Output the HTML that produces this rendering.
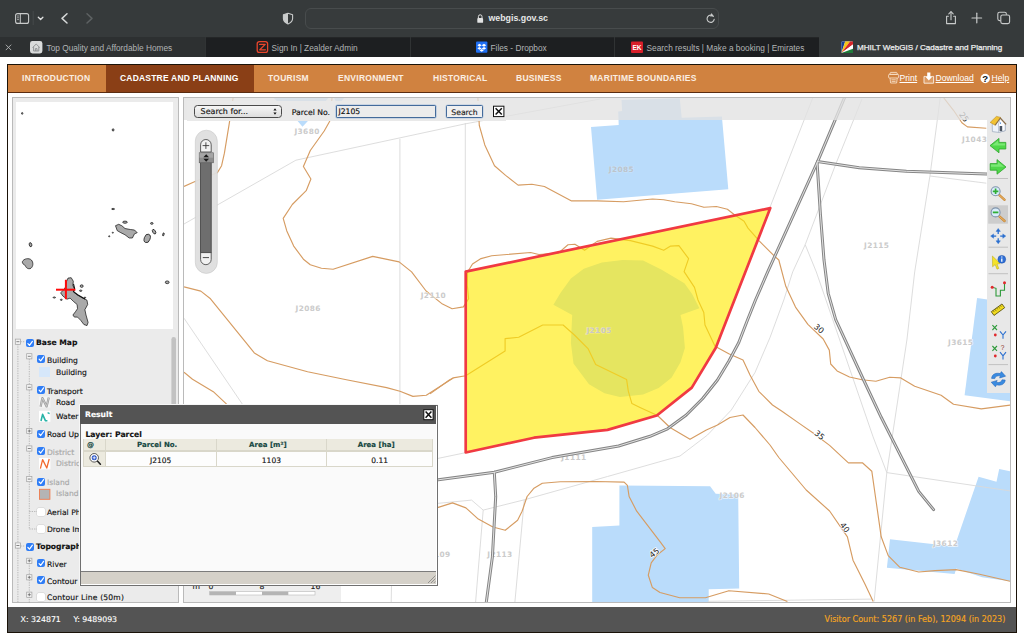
<!DOCTYPE html>
<html>
<head>
<meta charset="utf-8">
<title>MHILT WebGIS / Cadastre and Planning</title>
<style>
html,body{margin:0;padding:0;}
body{width:1024px;height:640px;overflow:hidden;background:#fff;position:relative;font-family:"Liberation Sans",sans-serif;}
.abs{position:absolute;}
svg{position:absolute;left:0;top:0;overflow:visible;}
#toolbar{left:0;top:0;width:1024px;height:37px;background:#363a3b;}
#tabbar{left:0;top:37px;width:1024px;height:20px;background:#1d1f21;border-top:1px solid #242627;box-sizing:border-box;}
.tab{position:absolute;top:37px;height:20px;box-sizing:border-box;}
.tabtxt{position:absolute;top:37.5px;height:20px;line-height:20px;color:#b2b5b6;font-size:8.3px;white-space:nowrap;}
#urlbar{left:305px;top:8px;width:414px;height:21px;border-radius:6px;background:#373b3c;border:1px solid #484c4d;box-sizing:border-box;}
#frame{left:7px;top:64px;width:1010px;height:569px;background:#fff;border:1px solid #1a1208;box-sizing:border-box;}
#nav{left:8px;top:65px;width:1008px;height:27px;background:#d08240;border-bottom:1px solid #5a2c10;}
.navi{position:absolute;top:65px;height:27px;line-height:27px;color:#fbeee2;font-size:8.5px;letter-spacing:0.27px;white-space:nowrap;font-weight:bold;}
.navr{position:absolute;top:65px;height:27px;line-height:26px;color:#fff;font-size:8.6px;white-space:nowrap;text-decoration:underline;}
#footer{left:8px;top:607px;width:1008px;height:25px;background:#545454;}
#left{left:12px;top:97px;width:167px;height:506px;background:#ebebeb;border:1px solid #bababa;box-sizing:border-box;overflow:hidden;}
#ov{left:16px;top:102px;width:157.4px;height:227px;background:#fff;}
#map{left:183px;top:97px;width:828px;height:506px;background:#fff;border:1px solid #bababa;box-sizing:border-box;}
.vd{font-family:"DejaVu Sans","Liberation Sans",sans-serif;-webkit-text-stroke:0.15px;}
.tr{position:absolute;font-family:"DejaVu Sans","Liberation Sans",sans-serif;font-size:7.6px;color:#111;white-space:nowrap;line-height:12px;height:12px;-webkit-text-stroke:0.15px;}
.cb{position:absolute;width:8px;height:8px;border-radius:2px;background:#2f7df6;}
.cbo{position:absolute;width:8px;height:8px;border-radius:1.5px;background:#fff;box-shadow:0 0 0 0.5px #cfcfcf;}
.ml{font-family:"DejaVu Sans","Liberation Sans",sans-serif;font-weight:bold;font-size:7.4px;fill:#cbcbcb;stroke:rgba(255,255,255,0.7);stroke-width:1.3px;paint-order:stroke;letter-spacing:0.4px;}
.cl{font-family:"DejaVu Sans","Liberation Sans",sans-serif;font-size:8px;fill:#222;stroke:#fff;stroke-width:1.5px;paint-order:stroke;}
.th{top:439.4px;height:11px;line-height:13.4px;overflow:hidden;background:#eceadf;color:#14463f;font-weight:bold;font-size:7px;text-align:center;padding-right:7px;box-sizing:border-box;}
.td{top:451.6px;height:14.2px;line-height:17.2px;overflow:hidden;background:#fdfdfd;color:#111;font-size:7.5px;text-align:center;}
</style>
</head>
<body>
<div id="toolbar" class="abs"></div>
<div id="urlbar" class="abs"></div>
<div id="tabbar" class="abs"></div>
<div class="tab" style="left:0;width:205px;background:#2d3031;"></div>
<div class="tab" style="left:205px;width:1px;background:#303334;"></div>
<div class="tab" style="left:410px;width:1px;background:#303334;"></div>
<div class="tab" style="left:614px;width:1px;background:#303334;"></div>
<div class="tab" style="left:819px;width:205px;background:#363a3b;top:37px;"></div>
<div class="tabtxt" style="left:46.5px;">Top Quality and Affordable Homes</div>
<div class="tabtxt" style="left:271.5px;">Sign In | Zealder Admin</div>
<div class="tabtxt" style="left:490.5px;">Files - Dropbox</div>
<div class="tabtxt" style="left:646.5px;">Search results | Make a booking | Emirates</div>
<div class="tabtxt" style="left:857px;color:#eceded;font-size:8.1px;-webkit-text-stroke:0.25px #eceded;">MHILT WebGIS / Cadastre and Planning</div>
<div class="abs" style="left:488.5px;top:8px;height:21px;line-height:21.6px;font-size:8.8px;color:#e6e7e7;font-weight:bold;">webgis.gov.sc</div>
<svg width="1024" height="60" viewBox="0 0 1024 60">
 <!-- sidebar icon -->
 <rect x="15.6" y="13.6" width="13" height="9.8" rx="2" fill="none" stroke="#c9cbcb" stroke-width="1.1"/>
 <line x1="20.3" y1="13.6" x2="20.3" y2="23.4" stroke="#c9cbcb" stroke-width="1"/>
 <line x1="17" y1="16" x2="19" y2="16" stroke="#c9cbcb" stroke-width="0.7"/>
 <line x1="17" y1="17.8" x2="19" y2="17.8" stroke="#c9cbcb" stroke-width="0.7"/>
 <line x1="17" y1="19.6" x2="19" y2="19.6" stroke="#c9cbcb" stroke-width="0.7"/>
 <line x1="33.2" y1="11" x2="33.2" y2="25" stroke="#4a4e4f" stroke-width="0.8"/>
 <polyline points="38.3,17.2 40.6,19.5 42.9,17.2" fill="none" stroke="#e0e1e1" stroke-width="1.3" stroke-linecap="round" stroke-linejoin="round"/>
 <polyline points="67,13.8 62,18.4 67,23" fill="none" stroke="#d6d8d8" stroke-width="1.5" stroke-linecap="round" stroke-linejoin="round"/>
 <polyline points="87,13.8 92,18.4 87,23" fill="none" stroke="#5d6162" stroke-width="1.5" stroke-linecap="round" stroke-linejoin="round"/>
 <!-- shield -->
 <path d="M288,13.2 L292.6,14.8 L292.6,18.6 C292.6,21.2 290.6,23 288,24 C285.4,23 283.4,21.2 283.4,18.6 L283.4,14.8 Z" fill="none" stroke="#c9cbcb" stroke-width="1.1" stroke-linejoin="round"/>
 <path d="M288,13.2 L283.4,14.8 L283.4,18.6 C283.4,21.2 285.4,23 288,24 Z" fill="#c9cbcb"/>
 <!-- lock -->
 <rect x="477.3" y="18" width="5.8" height="4.8" rx="0.9" fill="#e2e3e3"/>
 <path d="M478.4,18.2 V16.6 A1.8,1.8 0 0 1 482,16.6 V18.2" fill="none" stroke="#e2e3e3" stroke-width="1"/>
 <!-- reload -->
 <path d="M713.4,16.4 A3.6,3.6 0 1 0 714.2,19.4" fill="none" stroke="#c9cbcb" stroke-width="1.1" stroke-linecap="round"/>
 <path d="M711.2,13 L713.8,16 L710.4,16.8 Z" fill="#c9cbcb" transform="rotate(10 712 15)"/>
 <!-- share -->
 <path d="M948.4,16.2 H946.6 V23.6 H955.4 V16.2 H953.6" fill="none" stroke="#c9cbcb" stroke-width="1.1" stroke-linejoin="round" stroke-linecap="round"/>
 <line x1="951" y1="12" x2="951" y2="19.8" stroke="#c9cbcb" stroke-width="1.1" stroke-linecap="round"/>
 <polyline points="948.8,13.8 951,11.6 953.2,13.8" fill="none" stroke="#c9cbcb" stroke-width="1.1" stroke-linecap="round" stroke-linejoin="round"/>
 <!-- plus -->
 <line x1="972" y1="18" x2="981.6" y2="18" stroke="#c9cbcb" stroke-width="1.2" stroke-linecap="round"/>
 <line x1="976.8" y1="13.2" x2="976.8" y2="22.8" stroke="#c9cbcb" stroke-width="1.2" stroke-linecap="round"/>
 <!-- tabs overview -->
 <rect x="1000.8" y="15" width="8.8" height="8.6" rx="1.8" fill="#363a3b" stroke="#c9cbcb" stroke-width="1.1"/>
 <path d="M1000.6,20.6 H999.6 A1.8,1.8 0 0 1 997.8,18.8 V14 A1.8,1.8 0 0 1 999.6,12.2 H1004.6 A1.8,1.8 0 0 1 1006.4,14 V14.8" fill="none" stroke="#c9cbcb" stroke-width="1.1"/>
 <path d="M5.8,44.7 L11.2,50.1 M11.2,44.7 L5.8,50.1" stroke="#b4b7b8" stroke-width="0.9" fill="none"/>
 <!-- tab favicons -->
 <rect x="30" y="41" width="12.4" height="12.4" rx="2.4" fill="#d9dbdb"/>
 <path d="M32.6,47.6 L36.2,44 L39.8,47.6 M33.6,46.8 V51 H38.8 V46.8 M35.4,51 V48.6 H37 V51" fill="none" stroke="#8a8d8e" stroke-width="0.9" stroke-linejoin="round"/>
 <rect x="257.2" y="41.6" width="10.4" height="10.8" rx="2.2" fill="none" stroke="#e8452c" stroke-width="1.3"/>
 <path d="M259.6,44.4 H265.2 L259.8,49.8 H265.4" fill="none" stroke="#e8452c" stroke-width="1.3" stroke-linejoin="round" stroke-linecap="round"/>
 <rect x="476" y="41.4" width="11.4" height="11.4" rx="1" fill="#1f6ff2"/>
 <path d="M479.4,43.8 L481.7,45.3 L479.4,46.8 L477.4,45.3 Z M484,43.8 L486.2,45.3 L484,46.8 L481.7,45.3 Z M479.4,46.9 L481.7,48.4 L484,46.9 L486.2,48.3 L484,49.8 L481.7,48.4 L479.4,49.8 L477.4,48.3 Z M479.6,50.4 L481.7,49 L483.8,50.4 L481.7,51.8 Z" fill="#fff"/>
 <rect x="631" y="41.4" width="12" height="11.6" rx="1" fill="#d81f2a"/>
 <text x="637" y="50" font-size="6.6" font-weight="bold" fill="#fff" text-anchor="middle" font-family="Liberation Sans, sans-serif">EK</text>
 <g>
  <rect x="841.4" y="41.4" width="11.6" height="11.6" rx="1" fill="#fff"/>
  <path d="M841.4,53 L841.4,41.4 L845.2,41.4 Z" fill="#1a3f94"/>
  <path d="M841.4,53 L845.2,41.4 L850,41.4 Z" fill="#f5c518"/>
  <path d="M841.4,53 L850,41.4 L853,41.4 L853,44.4 Z" fill="#d6262b"/>
  <path d="M841.4,53 L853,44.4 L853,48.8 Z" fill="#ffffff"/>
  <path d="M841.4,53 L853,48.8 L853,53 Z" fill="#1f7a3a"/>
 </g>
</svg>
<div id="frame" class="abs"></div>
<div id="nav" class="abs"></div>
<div class="abs" style="left:106px;top:65px;width:148px;height:27px;background:#8a3f16;"></div>
<div class="navi" style="left:22px;">INTRODUCTION</div>
<div class="navi" style="left:120px;color:#fff;letter-spacing:0.2px;">CADASTRE AND PLANNING</div>
<div class="navi" style="left:268px;">TOURISM</div>
<div class="navi" style="left:338px;">ENVIRONMENT</div>
<div class="navi" style="left:433px;">HISTORICAL</div>
<div class="navi" style="left:516px;">BUSINESS</div>
<div class="navi" style="left:590px;">MARITIME BOUNDARIES</div>
<div class="navr" style="left:899.5px;">Print</div>
<div class="navr" style="left:935.5px;">Download</div>
<div class="navr" style="left:991.5px;">Help</div>
<svg width="1024" height="100" viewBox="0 0 1024 100">
 <!-- print icon -->
 <g fill="none" stroke="#f6dcc4" stroke-width="0.9" stroke-linejoin="round">
  <path d="M889.6,74.4 L890.6,72.4 H896.6 L897.6,74.4 Z"/>
  <rect x="888.6" y="74.4" width="10" height="3.6" rx="0.8"/>
  <path d="M890,78 L890.6,83 H896.6 L897.2,78"/>
  <path d="M891.4,79.8 H895.8 M891.6,81.4 H895.6"/>
 </g>
 <!-- download icon -->
 <g>
  <path d="M925.4,76.4 H924 V83.2 H933.6 V76.4 H932.2" fill="#dc9a62" stroke="#f8e6d6" stroke-width="1" stroke-linejoin="round"/>
  <path d="M927.2,72.4 H930.4 V76.2 H932.6 L928.8,80.6 L925,76.2 H927.2 Z" fill="#fff"/>
 </g>
 <!-- help icon -->
 <circle cx="985.2" cy="78.5" r="4.7" fill="#fff"/>
 <text x="985.2" y="82" font-size="9.6" font-weight="bold" fill="#111" text-anchor="middle" font-family="Liberation Sans, sans-serif">?</text>
</svg>
<div id="left" class="abs"></div>
<div id="ov" class="abs"></div>
<svg width="200" height="340" viewBox="0 0 200 340">
 <g fill="#a9a9a9" stroke="#000" stroke-width="0.65" stroke-linejoin="round">
  <ellipse cx="22.2" cy="113.4" rx="0.7" ry="0.9"/>
  <ellipse cx="113.1" cy="129.9" rx="0.9" ry="1.2"/>
  <ellipse cx="113.1" cy="209" rx="1.6" ry="0.6"/>
  <polygon points="115.5,225.7 118.7,224.3 121.8,225.7 125,228.5 130.3,229.5 134.5,230 137.2,232.7 134.5,233.8 132.4,238 129.2,238 125,234.8 120.8,232.7 117.2,230.6"/>
  <ellipse cx="125" cy="222.2" rx="2.3" ry="1.1"/>
  <ellipse cx="109.2" cy="236.3" rx="0.6" ry="0.6"/>
  <ellipse cx="112.8" cy="232.7" rx="0.6" ry="0.5"/>
  <ellipse cx="151.8" cy="223.4" rx="1.3" ry="0.9"/>
  <ellipse cx="154.1" cy="231.7" rx="1.4" ry="2.5" transform="rotate(-30 154.1 231.7)"/>
  <ellipse cx="163.4" cy="234.4" rx="0.7" ry="1.6" transform="rotate(15 163.4 234.4)"/>
  <ellipse cx="147.2" cy="238.4" rx="2.9" ry="4.4" transform="rotate(20 147.2 238.4)"/>
  <ellipse cx="30.5" cy="244.7" rx="1.3" ry="2.1" transform="rotate(-15 30.5 244.7)"/>
  <path d="M22.4,261.6 C23.6,258.6 29,257.6 31.4,260 C33.6,262.6 33.2,266.4 31,268.2 C28.6,269.6 25.8,268 25.4,265.6 C23.6,264.6 22,263.4 22.4,261.6 Z"/>
  <ellipse cx="167.2" cy="282.3" rx="1.9" ry="1.4"/>
  <polygon points="68,278.1 71.2,277.7 73.3,281.2 72.9,285.5 74.4,288.6 73.3,291.8 77.5,295 82.8,298.1 87,300.2 87.7,304.5 84.9,309.7 86,315 88.1,322.4 87,325.6 83.9,324.5 80.7,320.3 77.5,317.1 74.4,317.1 72.9,315 75.4,311.8 77.5,308.7 77.1,304.5 73.3,301.3 70.1,298.1 67,299.2 62.8,296 60.6,292.8 63.8,289.7 65.9,286.5 66.6,281.2"/>
  <ellipse cx="81.7" cy="286.1" rx="1.5" ry="1.3"/>
  <ellipse cx="80.7" cy="290.7" rx="1.2" ry="0.7"/>
  <ellipse cx="54.3" cy="297.5" rx="1.2" ry="0.6"/>
  <ellipse cx="61.3" cy="299.8" rx="1" ry="0.6"/>
  <ellipse cx="84.9" cy="297.6" rx="0.8" ry="0.5"/>
 </g>
 <path d="M73.5,284 L74.6,288.6 L73.6,291.6 L77.6,294.8 L82.8,297.8 L85,299" fill="none" stroke="#111" stroke-width="1.1"/>
 <line x1="56" y1="289.7" x2="75.4" y2="289.7" stroke="#ff0a0a" stroke-width="2"/>
 <line x1="65.9" y1="279.8" x2="65.9" y2="299.2" stroke="#ff0a0a" stroke-width="2"/>
</svg>
<div class="cb" style="left:26px;top:339.40000000000003px;"></div>
<div class="tr" style="left:36px;top:337.1px;font-weight:bold;">Base Map</div>
<div class="cb" style="left:26px;top:543.1999999999999px;"></div>
<div class="tr" style="left:36px;top:540.9px;font-weight:bold;">Topographic Map</div>
<div class="cb" style="left:37.2px;top:354.8px;"></div>
<div class="tr" style="left:47px;top:354.6px;">Building</div>
<div class="cb" style="left:37.2px;top:385.8px;"></div>
<div class="tr" style="left:47px;top:385.6px;">Transport</div>
<div class="cb" style="left:37.2px;top:429.5px;"></div>
<div class="tr" style="left:47px;top:429.3px;">Road Update</div>
<div class="cb" style="left:37.2px;top:447.0px;"></div>
<div class="tr" style="left:47px;top:446.8px;color:#a8a8a8;">District</div>
<div class="cb" style="left:37.2px;top:477.6px;"></div>
<div class="tr" style="left:47px;top:477.4px;color:#a8a8a8;">Island</div>
<div class="cb" style="left:37.2px;top:559.3px;"></div>
<div class="tr" style="left:47px;top:559.1px;">River</div>
<div class="cb" style="left:37.2px;top:575.8px;"></div>
<div class="tr" style="left:47px;top:575.6px;">Contour Line</div>
<div class="cbo" style="left:37.4px;top:507.6px;"></div>
<div class="tr" style="left:47px;top:506.6px;">Aerial Photo</div>
<div class="cbo" style="left:37.4px;top:524.8px;"></div>
<div class="tr" style="left:47px;top:523.8px;">Drone Image</div>
<div class="cbo" style="left:37.4px;top:592.8px;"></div>
<div class="tr" style="left:47px;top:591.8px;letter-spacing:0.17px;">Contour Line (50m)</div>
<div class="tr" style="left:56px;top:367.2px;">Building</div>
<div class="abs" style="left:39px;top:366.6px;width:11.4px;height:10.4px;background:#d6e7fa;"></div>
<div class="tr" style="left:56px;top:397.2px;">Road</div>
<div class="tr" style="left:56px;top:411.0px;">Water Way</div>
<div class="tr" style="left:56px;top:458.0px;color:#a8a8a8;">District</div>
<div class="tr" style="left:56px;top:488.4px;color:#a8a8a8;">Island</div>
<svg width="200" height="640" viewBox="0 0 200 640">
<line x1="17.9" y1="344" x2="17.9" y2="603" stroke="#a4a4a4" stroke-width="0.7" stroke-dasharray="1.3,1.1"/>
<line x1="29.3" y1="359" x2="29.3" y2="529" stroke="#a4a4a4" stroke-width="0.7" stroke-dasharray="1.3,1.1"/>
<line x1="29.3" y1="563" x2="29.3" y2="603" stroke="#a4a4a4" stroke-width="0.7" stroke-dasharray="1.3,1.1"/>
<line x1="29.3" y1="511.5" x2="37" y2="511.5" stroke="#a4a4a4" stroke-width="0.7" stroke-dasharray="1.3,1.1"/>
<line x1="29.3" y1="529" x2="37" y2="529" stroke="#a4a4a4" stroke-width="0.7" stroke-dasharray="1.3,1.1"/>
<line x1="20.5" y1="341.7" x2="25" y2="341.7" stroke="#a4a4a4" stroke-width="0.7" stroke-dasharray="1.3,1.1"/>
<line x1="20.5" y1="546" x2="25" y2="546" stroke="#a4a4a4" stroke-width="0.7" stroke-dasharray="1.3,1.1"/>
<rect x="15.3" y="339.1" width="5.2" height="5.2" fill="#f4f4f4" stroke="#a0a0a0" stroke-width="0.7"/>
<line x1="16.4" y1="341.70000000000005" x2="19.4" y2="341.70000000000005" stroke="#666" stroke-width="0.8"/>
<polyline points="27.9,343.7 29.5,345.4 32.4,341.4" fill="none" stroke="#fff" stroke-width="1.2" stroke-linecap="round" stroke-linejoin="round"/>
<rect x="15.3" y="542.9" width="5.2" height="5.2" fill="#f4f4f4" stroke="#a0a0a0" stroke-width="0.7"/>
<line x1="16.4" y1="545.5" x2="19.4" y2="545.5" stroke="#666" stroke-width="0.8"/>
<polyline points="27.9,547.5 29.5,549.2 32.4,545.2" fill="none" stroke="#fff" stroke-width="1.2" stroke-linecap="round" stroke-linejoin="round"/>
<rect x="26.7" y="353.7" width="5.2" height="5.2" fill="#f4f4f4" stroke="#a0a0a0" stroke-width="0.7"/>
<line x1="27.8" y1="356.3" x2="30.8" y2="356.3" stroke="#666" stroke-width="0.8"/>
<polyline points="39.1,359.1 40.7,360.8 43.6,356.8" fill="none" stroke="#fff" stroke-width="1.2" stroke-linecap="round" stroke-linejoin="round"/>
<rect x="26.7" y="384.7" width="5.2" height="5.2" fill="#f4f4f4" stroke="#a0a0a0" stroke-width="0.7"/>
<line x1="27.8" y1="387.3" x2="30.8" y2="387.3" stroke="#666" stroke-width="0.8"/>
<polyline points="39.1,390.1 40.7,391.8 43.6,387.8" fill="none" stroke="#fff" stroke-width="1.2" stroke-linecap="round" stroke-linejoin="round"/>
<rect x="26.7" y="428.4" width="5.2" height="5.2" fill="#f4f4f4" stroke="#a0a0a0" stroke-width="0.7"/>
<line x1="27.8" y1="431.0" x2="30.8" y2="431.0" stroke="#666" stroke-width="0.8"/>
<line x1="29.3" y1="429.5" x2="29.3" y2="432.5" stroke="#666" stroke-width="0.8"/>
<polyline points="39.1,433.8 40.7,435.5 43.6,431.5" fill="none" stroke="#fff" stroke-width="1.2" stroke-linecap="round" stroke-linejoin="round"/>
<rect x="26.7" y="445.9" width="5.2" height="5.2" fill="#f4f4f4" stroke="#a0a0a0" stroke-width="0.7"/>
<line x1="27.8" y1="448.5" x2="30.8" y2="448.5" stroke="#666" stroke-width="0.8"/>
<polyline points="39.1,451.3 40.7,453.0 43.6,449.0" fill="none" stroke="#fff" stroke-width="1.2" stroke-linecap="round" stroke-linejoin="round"/>
<rect x="26.7" y="476.5" width="5.2" height="5.2" fill="#f4f4f4" stroke="#a0a0a0" stroke-width="0.7"/>
<line x1="27.8" y1="479.1" x2="30.8" y2="479.1" stroke="#666" stroke-width="0.8"/>
<polyline points="39.1,481.9 40.7,483.6 43.6,479.6" fill="none" stroke="#fff" stroke-width="1.2" stroke-linecap="round" stroke-linejoin="round"/>
<rect x="26.7" y="558.2" width="5.2" height="5.2" fill="#f4f4f4" stroke="#a0a0a0" stroke-width="0.7"/>
<line x1="27.8" y1="560.8" x2="30.8" y2="560.8" stroke="#666" stroke-width="0.8"/>
<line x1="29.3" y1="559.3" x2="29.3" y2="562.3" stroke="#666" stroke-width="0.8"/>
<polyline points="39.1,563.6 40.7,565.3 43.6,561.3" fill="none" stroke="#fff" stroke-width="1.2" stroke-linecap="round" stroke-linejoin="round"/>
<rect x="26.7" y="574.7" width="5.2" height="5.2" fill="#f4f4f4" stroke="#a0a0a0" stroke-width="0.7"/>
<line x1="27.8" y1="577.3" x2="30.8" y2="577.3" stroke="#666" stroke-width="0.8"/>
<line x1="29.3" y1="575.8" x2="29.3" y2="578.8" stroke="#666" stroke-width="0.8"/>
<polyline points="39.1,580.1 40.7,581.8 43.6,577.8" fill="none" stroke="#fff" stroke-width="1.2" stroke-linecap="round" stroke-linejoin="round"/>
<rect x="26.7" y="592.1" width="5.2" height="5.2" fill="#f4f4f4" stroke="#a0a0a0" stroke-width="0.7"/>
<line x1="27.8" y1="594.6999999999999" x2="30.8" y2="594.6999999999999" stroke="#666" stroke-width="0.8"/>
<line x1="29.3" y1="593.2" x2="29.3" y2="596.2" stroke="#666" stroke-width="0.8"/>
<rect x="39" y="396.6" width="11.4" height="11" fill="#f4f4f4"/>
<polyline points="40.6,406.8 42.4,398 46.6,406.4 48.8,397.4" fill="none" stroke="#9a9a9a" stroke-width="2.2" stroke-linejoin="round"/>
<polyline points="40.6,406.8 42.4,398 46.6,406.4 48.8,397.4" fill="none" stroke="#dcdcdc" stroke-width="0.7" stroke-linejoin="round"/>
<rect x="39" y="410.8" width="11.4" height="11" fill="#fff"/>
<polyline points="41,421 42.6,414.4 45.4,420.6 47.4,420.8" fill="none" stroke="#27b3a7" stroke-width="1.6" stroke-linejoin="round"/>
<polyline points="47.6,412.6 49.6,413.6" fill="none" stroke="#27b3a7" stroke-width="1.2"/>
<rect x="39" y="458" width="11.4" height="11.4" fill="#fff"/>
<polyline points="40.4,468.6 42.6,459.6 46.8,468 49.2,458.8" fill="none" stroke="#f26a2e" stroke-width="1.3" stroke-linejoin="round"/>
<rect x="39.5" y="489.3" width="10.4" height="10" fill="#b4b4b4" stroke="#ee7a4c" stroke-width="0.9"/>
<rect x="171.4" y="337" width="4.6" height="190" rx="2.3" fill="#c2c2c2"/>
</svg>
<div id="map" class="abs"></div>
<svg width="1024" height="640" viewBox="0 0 1024 640">
<defs><clipPath id="mc"><rect x="184" y="98" width="826" height="504"/></clipPath>
<clipPath id="pc"><polygon points="465.7,271.6 770.3,208.1 715.8,347.7 691.8,387.6 656.8,415.5 607.5,429.9 534,437.7 465.7,452.5"/></clipPath>
</defs>
<g clip-path="url(#mc)">
 <!-- buildings -->
 <g fill="#badcfb">
  <polygon points="591,126.9 618.7,125 618.2,111.6 622.1,111.1 621.5,100 679.8,98.3 681.7,117.7 721.9,116.6 728.3,189.3 597.1,199.8"/>
  <polygon points="273.7,98 328.4,98 325,102 307.9,121 302.5,126.7 297.6,121 278,102"/>
  <polygon points="334.2,98 344,98 341,102 336,102"/>
  <polygon points="977.1,298 1011,303 1011,401.5 964.6,395.3"/>
  <polygon points="619.4,485.4 710.1,486.2 715.7,493.7 738.2,494.6 739.2,588.4 708.7,589.3 708.7,603 592.2,603 592.2,527 619.4,525.6"/>
  <polygon points="978.6,476.7 996.5,481.8 999.2,469.1 1011,471.5 1011,581.5 982.1,577.3 956.3,568.4 954.6,573.9 886.9,567.7 890,539.2 954.6,546.4"/>
  <polygon points="553.4,304.8 560.6,292.7 570.9,278.5 583.8,268.7 601.9,262.5 622.5,260 643.1,260.5 661.2,269.5 684.4,283.2 692.1,294 699.4,308.2 680.5,315.1 683.1,327.5 684.9,348.1 680.5,362.3 671.5,377.8 658.6,388.1 643.1,394.6 619.9,397.1 604.5,393.3 589,384.2 573.5,363.6 570.9,343 572.2,315.1"/>
 </g>
 <!-- thin parcel lines -->
 <g fill="none" stroke="#d9d9d9" stroke-width="0.9">
  <polyline points="184,224 295.9,160.2 464,124.1 475.3,122 600,99"/>
  <line x1="399.9" y1="138.8" x2="399.9" y2="410"/>
  <line x1="391.6" y1="580" x2="391.2" y2="602"/>
  <line x1="465.3" y1="123" x2="465.3" y2="272"/>
  <line x1="184" y1="318.2" x2="242.4" y2="404.2"/>
  <line x1="812.7" y1="98" x2="770" y2="207.3"/>
  <polyline points="862,99 835.7,164.3 805.2,244.7 792.7,271.9 783.8,300 770,337.5 755,372.5 731.3,410 707.5,435 680,456 607.5,476.5 524.3,499.8 483.2,510.1 471.6,500.1 437.5,503.4"/>
  <polyline points="940.2,98 930,175.4 914.7,271.9 906.9,340 886.8,472.6 874.1,601.5"/>
  <line x1="930" y1="176" x2="986.3" y2="183.2"/>
  <polyline points="805.2,244.7 816.3,271.9 873.1,436.9 886.8,472.6 1010,490.9"/>
  <line x1="483.2" y1="510.1" x2="475.6" y2="602"/>
  <line x1="524.3" y1="499.8" x2="514.9" y2="602"/>
  <line x1="437.5" y1="458.5" x2="465.5" y2="452.7"/>
  <line x1="707.8" y1="601.3" x2="871.8" y2="599.1"/>
 </g>
 <!-- contours -->
 <g fill="none" stroke="#d69c62" stroke-width="1.15" stroke-linejoin="round">
  <polyline points="233.2,97.2 229.4,122.7 224.4,153.2 221.6,165.7 217.4,172.6 195,181.5 184,186.5"/>
  <polyline points="332,98 329.7,121.3 324.2,131 310.3,150.5 303.4,166.5 310.9,179 306.2,190.7 292.3,204.5 283.2,218.4 286.8,230.9 293.7,246.1 303.4,259.2 310.3,264.7 321.4,268.3 333.1,269.2 372.7,256.4 399.1,261.9 411.6,271.9 426.1,291 442.5,304.1 452.1,308.7 463.4,306.9 468.6,298.7 467.3,285 467.6,272 472.5,264 481,258.6 491.7,255.8 530.6,252.5 538.9,254.5 558.3,253.1 568,244.7 574.9,244.2 584.6,250.3 597.1,241.4 611,238.1 630.4,240.6 652.6,246.1 663.7,250.3 670.6,246.1 678.9,245.6 688.6,258.6 684.1,271.6 694.5,287.4 698,300 703.8,312.5 705,325 715,346.3 728.8,353.8 743,360 750,375 758.8,391.3 772.5,405 781.6,411.1 799.6,423.6 813.5,433.3 829.6,445.4 848.4,462.8 862.4,462.8 871.8,471.2 876.5,504 881.2,536.8 888.2,555.6 899.9,567.3 918.7,572 935.1,570.6 956.1,569.6 979.6,574.3 1010,581.3"/>
  <polyline points="477.9,98 479.3,125.5 484.8,144.9 494.5,165.7 505.6,175.4 518.1,185.1 531.9,184.3 544.4,186.5 571.6,200.9 597.1,200.9 623.5,201.8 652.6,199 663.7,199.8 674.8,201.8 691.4,203.7 703.9,207.3 716.4,206.5 727.4,209.3 734.4,214.8 744.1,221.2 748,228.1 759.4,241.1 773.9,255.6 778.8,260 785.8,286.3 795.5,307.1 807.9,324.3 823.2,339 829.3,350.1 830.7,364 837.1,370.9 849.5,377 862,379.8 875.9,381.2 889.7,377.3 900.8,377.9 914.7,386.2 941.1,395.3 953.5,404.2 981.3,408.9 1010.4,405"/>
  <polyline points="184,286.9 200.8,291.1 210.5,298.8 254.3,352.9 267.4,360.7 307.6,371.8 346.4,379.8 386.6,387.6 400,391.3 412.9,396.4 426.3,395.3 453.2,377.9 465.7,375.8 505.1,350.9 505.1,338.6 518.7,337.3 542.7,325 563.1,325 574.4,335 588,348.6 595.7,364.4 626.6,379.4 628.3,391.1 631.9,403.6 640,407.5 657.5,415.5 670,427.5 690,439.3 706.3,430 717.5,425 730,417.5 743,415 755,427.5 770,445 778.8,457.5 806.2,490 829.6,511 847.4,536.8 853,560.2 864.8,583.7 873.2,601.5"/>
  <polyline points="184,372.3 192.5,379.2 213.3,391.7 226.6,404.2 240,414"/>
  <polyline points="430,393.9 449.4,380 453.2,377.9"/>
  <polyline points="437.5,507.6 452.5,502.9 465.9,507.9 478.3,519.1 492.9,527 505.2,530.3 517.6,520.2 522.1,511.2 527.1,496.5 534,488.2 542.3,483.2 560.3,481.8 596.4,481.5 624.1,482.1 627.4,485.4 629.1,496.5 636.7,511.2 660,541.6 665.2,548.6 657.4,554.7 651.2,562.9 648.3,575.2 652.4,587.6 660,592.5 679.7,597.7 705.4,597.7 728.9,590.7 768.7,594 787.4,601.5"/>
  <polyline points="943.8,98 953.5,110.3 961.9,122.7 967.4,126.9 986.3,128.3"/>
 </g>
 <text class="ml" x="294.4" y="134">J3680</text>
 <text class="ml" x="295.6" y="311.3">J2086</text>
 <text class="ml" x="420.7" y="298">J2110</text>
 <text class="ml" x="608.8" y="172.1" style="fill:#bcc4cc;stroke:#c6e2fb;">J2085</text>
 <text class="ml" x="864" y="247.5">J2115</text>
 <text class="ml" x="961.9" y="142.1">J1043</text>
 <text class="ml" x="948" y="345.1">J3615</text>
 <text class="ml" x="561.2" y="459.6">J1111</text>
 <text class="ml" x="719.5" y="497.9">J2106</text>
 <text class="ml" x="932.9" y="545.7">J3612</text>
 <text class="ml" x="487.3" y="557.3">J2113</text>
 <text class="ml" x="425.2" y="557.3">J2109</text>
 <!-- roads -->
 <g fill="none" stroke="#858585" stroke-width="3" stroke-linejoin="round" stroke-linecap="round">
  <polyline points="844.8,97 817.6,161.6 767.7,271.9 755.5,300 747.5,320 738.8,342.5 728.8,361.3 717.5,380 702.5,398.8 686.3,415 667.5,428.8 650,436.3 618.6,446 552,457.6 494.3,472.3 438.3,479.8 420,482"/>
  <polyline points="817.6,161.6 859.2,167.7 906.4,171.3 986.3,174 1000,174"/>
  <polyline points="817.1,162.9 820.4,214.2 824,260 828.2,293.3 835.7,319.6 862,376.5 881.2,417.3 918.7,491.4 933.6,509.6"/>
  <polyline points="494.3,472.3 495.7,496.5 492.4,556.9 486.2,603"/>
 </g>
 <g fill="none" stroke="#ececec" stroke-width="0.9" stroke-linejoin="round" stroke-linecap="round">
  <polyline points="844.8,97 817.6,161.6 767.7,271.9 755.5,300 747.5,320 738.8,342.5 728.8,361.3 717.5,380 702.5,398.8 686.3,415 667.5,428.8 650,436.3 618.6,446 552,457.6 494.3,472.3 438.3,479.8 420,482"/>
  <polyline points="817.6,161.6 859.2,167.7 906.4,171.3 986.3,174 1000,174"/>
  <polyline points="817.1,162.9 820.4,214.2 824,260 828.2,293.3 835.7,319.6 862,376.5 881.2,417.3 918.7,491.4 933.6,509.6"/>
  <polyline points="494.3,472.3 495.7,496.5 492.4,556.9 486.2,603"/>
 </g>
 <!-- labels -->
 <text class="cl" transform="translate(964,117) rotate(55)" text-anchor="middle" dy="2.8">25</text>
 <text class="cl" transform="translate(819,328.5) rotate(40)" text-anchor="middle" dy="2.8">30</text>
 <text class="cl" transform="translate(819.5,435) rotate(40)" text-anchor="middle" dy="2.8">35</text>
 <text class="cl" transform="translate(844.8,527.4) rotate(52)" text-anchor="middle" dy="2.8">40</text>
 <text class="cl" transform="translate(654.2,552.8) rotate(-38)" text-anchor="middle" dy="2.8">45</text>
 <!-- highlight polygon -->
 <polygon points="465.7,271.6 770.3,208.1 715.8,347.7 691.8,387.6 656.8,415.5 607.5,429.9 534,437.7 465.7,452.5" fill="#ffea00" fill-opacity="0.62" stroke="none"/>
 <polygon points="465.7,271.6 770.3,208.1 715.8,347.7 691.8,387.6 656.8,415.5 607.5,429.9 534,437.7 465.7,452.5" fill="none" stroke="#f03a42" stroke-width="2.7" stroke-linejoin="round"/>
 <text class="ml" x="586.4" y="332.7" style="fill:#c9c9c4;stroke:#f6ee8a;stroke-width:1.2px">J2105</text>
</g>
</svg>
<!-- scale bar -->
<div class="abs" style="left:184px;top:576px;width:156.5px;height:26px;background:rgba(236,236,236,0.88);"></div>
<div class="abs vd" style="left:192.5px;top:582.4px;font-size:7.7px;line-height:10px;color:#222;">m</div>
<div class="abs vd" style="left:208.5px;top:582.4px;font-size:7.7px;line-height:10px;color:#222;">0</div>
<div class="abs vd" style="left:259.5px;top:582.4px;font-size:7.7px;line-height:10px;color:#222;">8</div>
<div class="abs vd" style="left:310.5px;top:582.4px;font-size:7.7px;line-height:10px;color:#222;">16</div>
<svg width="1024" height="640" viewBox="0 0 1024 640">
 <rect x="209.7" y="591.6" width="105.3" height="3.4" fill="#fff" stroke="#b8b8b8" stroke-width="0.6"/>
 <rect x="209.7" y="591.6" width="26.3" height="3.4" fill="#b4b4b4"/>
 <rect x="262" y="591.6" width="26.3" height="3.4" fill="#b4b4b4"/>
</svg>
<!-- search band -->
<div class="abs" style="left:184px;top:98px;width:826px;height:21.5px;background:rgba(225,225,225,0.78);"></div>
<div class="abs" style="left:187px;top:101.4px;width:319px;height:19.8px;background:#e9e9e9;"></div>
<div class="abs" style="left:986.5px;top:119.5px;width:23.5px;height:273.5px;background:#e8e8e8;"></div>
<!-- select -->
<div class="abs vd" style="left:194px;top:105.3px;width:87.5px;height:12.4px;box-sizing:border-box;border:1px solid #4a4a4a;border-radius:3.5px;background:linear-gradient(#f6f6f6,#dedede);font-size:7.95px;line-height:12.6px;padding-left:5.6px;color:#111;overflow:hidden;">Search for...</div>
<div class="abs vd" style="left:291.7px;top:106.6px;font-size:7.7px;line-height:12px;color:#111;">Parcel No.</div>
<div class="abs vd" style="left:335.9px;top:105.4px;width:100px;height:12.4px;box-sizing:border-box;border:1.1px solid #446b9b;border-radius:1.2px;background:#ececec;box-shadow:0 0 0 0.6px #a9c0dc;font-size:7.7px;line-height:12.8px;padding-left:1.5px;color:#111;">J2105</div>
<div class="abs vd" style="left:446.2px;top:104.9px;width:36.6px;height:13.6px;box-sizing:border-box;border:1.1px solid #446b9b;border-radius:1.5px;background:#f0f0f0;box-shadow:0 0 0 0.5px #b5c8de;font-size:7.7px;line-height:13.4px;text-align:center;color:#222;">Search</div>
<svg width="1024" height="640" viewBox="0 0 1024 640">
 <path d="M273.4,110.6 L275,108.2 L276.6,110.6 Z M273.4,112.4 L275,114.8 L276.6,112.4 Z" fill="#111"/>
 <rect x="493.5" y="106.2" width="10.4" height="10.4" fill="#fff" stroke="#111" stroke-width="1"/>
 <path d="M495.6,108.3 L501.8,114.5 M501.8,108.3 L495.6,114.5" stroke="#111" stroke-width="1.5" fill="none"/>
 <!-- zoom slider -->
 <rect x="195.3" y="130.2" width="22" height="143.2" rx="11" fill="#dedede" fill-opacity="0.95" stroke="#c8c8c8" stroke-width="0.6"/>
 <path d="M200.6,152 V144.8 A5.3,5.3 0 0 1 211.2,144.8 V152 Z" fill="#f2f2f2" stroke="#3a3a3a" stroke-width="0.8"/>
 <path d="M202.6,145.6 H209.2 M205.9,142.3 V148.9" stroke="#3a3a3a" stroke-width="0.9" fill="none"/>
 <rect x="200.6" y="162" width="10.6" height="90.6" fill="#6e6e6e" stroke="#3c3c3c" stroke-width="0.8"/>
 <rect x="199.2" y="152.8" width="14.2" height="10" fill="#8e8e8e" stroke="#5a5a5a" stroke-width="0.6"/>
 <rect x="199.5" y="153.1" width="13.6" height="4.6" fill="#a6a6a6"/>
 <path d="M203.4,157.2 L206.2,154.2 L209,157.2 Z M203.4,158.8 L206.2,161.8 L209,158.8 Z" fill="#1a1a1a"/>
 <path d="M200.6,252.6 V259.4 A5.3,5.3 0 0 0 211.2,259.4 V252.6 Z" fill="#f2f2f2" stroke="#3a3a3a" stroke-width="0.8"/>
 <path d="M202.8,257.6 H209" stroke="#3a3a3a" stroke-width="0.9" fill="none"/>
 <!-- toolbar icons -->
 <g>
  <!-- home -->
  <path d="M992.2,124.4 L992.4,131.6 L998.6,132.4 L1005.2,130.6 L1005.2,123.6 L1000.2,118.2 Z" fill="#eef3fa" stroke="#8a98b0" stroke-width="0.6"/>
  <path d="M998.6,132.4 L1005.2,130.6 L1005.2,123.6 L1000.2,118.2 L998.4,125 Z" fill="#fbfcfe" stroke="#8a98b0" stroke-width="0.5"/>
  <path d="M990.2,122.4 L996.4,116.4 L1000.6,117.4 L995.2,125.2 Z" fill="#f2c233" stroke="#b98a1a" stroke-width="0.6" stroke-linejoin="round"/>
  <path d="M1000.4,117.2 L1006.6,124 L1005.6,124.8 L1000.2,119 L995.6,125.6 L994.6,125 Z" fill="#8c6f4a"/>
  <rect x="999.6" y="126" width="2.6" height="5.2" fill="#4a5564"/>
  <rect x="1000" y="122.4" width="1" height="1.6" fill="#6aa0e0"/>
  <!-- back arrow -->
  <path d="M990,145.6 L999,138.4 L999,142.4 L1005.8,142.4 L1005.8,149 L999,149 L999,152.8 Z" fill="#4fd84a" stroke="#2da32b" stroke-width="0.8" stroke-linejoin="round"/>
  <path d="M992,145.4 L998.2,140.6 L998.2,143.4 L1005,143.4 L1005,145.4 Z" fill="#8df088" opacity="0.7"/>
  <!-- forward arrow -->
  <path d="M1006,167 L997,159.6 L997,163.6 L990.2,163.6 L990.2,170.2 L997,170.2 L997,174.2 Z" fill="#4fd84a" stroke="#2da32b" stroke-width="0.8" stroke-linejoin="round"/>
  <path d="M1004,166.8 L997.8,161.8 L997.8,164.6 L991,164.6 L991,166.8 Z" fill="#8df088" opacity="0.7"/>
  <line x1="988.5" y1="178.5" x2="1008" y2="178.5" stroke="#b0b0b0" stroke-width="0.7"/>
  <!-- zoom in -->
  <line x1="999.4" y1="195.2" x2="1004.6" y2="199.8" stroke="#c98a3a" stroke-width="2.4" stroke-linecap="round"/>
  <line x1="999.4" y1="195.2" x2="1004.6" y2="199.8" stroke="#f0b868" stroke-width="1" stroke-linecap="round"/>
  <circle cx="995.6" cy="191.3" r="4.5" fill="#d8ecfb" stroke="#7f93ab" stroke-width="1.1"/>
  <path d="M992.8,191.3 H998.4 M995.6,188.5 V194.1" stroke="#2fae35" stroke-width="1.7" fill="none"/>
  <!-- zoom out selected -->
  <rect x="988.2" y="205.3" width="19.8" height="18.4" fill="#cdcdcd"/>
  <line x1="999.4" y1="216.4" x2="1004.6" y2="221" stroke="#c98a3a" stroke-width="2.4" stroke-linecap="round"/>
  <line x1="999.4" y1="216.4" x2="1004.6" y2="221" stroke="#f0b868" stroke-width="1" stroke-linecap="round"/>
  <circle cx="995.6" cy="212.4" r="4.5" fill="#d8ecfb" stroke="#7f93ab" stroke-width="1.1"/>
  <path d="M992.8,212.4 H998.4" stroke="#2fae35" stroke-width="1.8" fill="none"/>
  <!-- pan -->
  <g stroke="#2a6fd0" stroke-width="1.3" fill="#2a6fd0">
   <line x1="998.2" y1="230.6" x2="998.2" y2="234"/>
   <line x1="998.2" y1="238.2" x2="998.2" y2="241.6"/>
   <line x1="992.8" y1="236.1" x2="996.2" y2="236.1"/>
   <line x1="1000.2" y1="236.1" x2="1003.6" y2="236.1"/>
   <path d="M998.2,228.4 L1000.4,231.4 L996,231.4 Z M998.2,243.8 L1000.4,240.8 L996,240.8 Z M990.6,236.1 L993.6,233.9 L993.6,238.3 Z M1005.8,236.1 L1002.8,233.9 L1002.8,238.3 Z" stroke-width="0.4"/>
  </g>
  <line x1="988.5" y1="247.2" x2="1008" y2="247.2" stroke="#b0b0b0" stroke-width="0.7"/>
  <!-- identify -->
  <path d="M992.4,256 L992.6,266.8 L995.2,264.6 L997,269.2 L998.8,268.4 L997,264 L1000.2,263.6 Z" fill="#f4e22a" stroke="#b8a60e" stroke-width="0.5" stroke-linejoin="round"/>
  <circle cx="1001.8" cy="259.3" r="3.9" fill="#2f6fd6" stroke="#1b4fa8" stroke-width="0.5"/>
  <path d="M1001.8,258.6 V261.8 M1001.8,256.6 V257.4" stroke="#fff" stroke-width="1.3" fill="none"/>
  <line x1="988.5" y1="273.7" x2="1008" y2="273.7" stroke="#b0b0b0" stroke-width="0.7"/>
  <!-- polyline -->
  <polyline points="992.3,287.3 996,288.3 996,296 1000.4,296 1000.4,290.3 1004.5,290.3 1004.5,283.2" fill="none" stroke="#2e9a3a" stroke-width="1.1"/>
  <circle cx="992.2" cy="287.2" r="1.5" fill="#e0282c"/>
  <circle cx="1004.5" cy="282.8" r="1.5" fill="#e0282c"/>
  <!-- ruler -->
  <g transform="translate(998,309.7) rotate(-36)">
   <rect x="-6.6" y="-2.3" width="13.2" height="4.6" fill="#f2dc1e" stroke="#5a5214" stroke-width="0.8"/>
   <path d="M-4.4,-2.3 V-0.4 M-2.2,-2.3 V0.2 M0,-2.3 V-0.4 M2.2,-2.3 V0.2 M4.4,-2.3 V-0.4" stroke="#5a5214" stroke-width="0.6"/>
  </g>
  <!-- X,Y -->
  <path d="M992.4,325.2 L997,330 M997,325.2 L992.4,330" stroke="#2e9a3a" stroke-width="1.1" fill="none"/>
  <circle cx="995.3" cy="335" r="1.4" fill="#e0282c"/>
  <path d="M1000,331.4 L1003,335 L1006,331.4 M1003,335 V338.8" stroke="#2a6fd0" stroke-width="1.1" fill="none"/>
  <!-- X?Y -->
  <path d="M992.4,346 L997,350.8 M997,346 L992.4,350.8" stroke="#2e9a3a" stroke-width="1.1" fill="none"/>
  <circle cx="995.3" cy="356" r="1.4" fill="#e0282c"/>
  <path d="M1000,352.2 L1003,355.8 L1006,352.2 M1003,355.8 V359.6" stroke="#2a6fd0" stroke-width="1.1" fill="none"/>
  <text x="1002.6" y="350.4" font-size="6.6" fill="#8a2a20" text-anchor="middle" font-family="Liberation Sans, sans-serif">?</text>
  <line x1="988.5" y1="364.6" x2="1008" y2="364.6" stroke="#b0b0b0" stroke-width="0.7"/>
  <!-- refresh -->
  <g fill="#3a8be0" stroke="#1f5fb4" stroke-width="0.5" stroke-linejoin="round">
   <path d="M991.6,378.4 C991.8,374.2 996,372.4 1000.2,373.6 L1001.4,371.6 L1005.6,376.2 L999.6,378 L1000.4,376 C997.6,375.4 995.2,376.2 994.8,378.6 Z"/>
   <path d="M1005.2,380 C1005,384.2 1000.8,386 996.6,384.8 L995.4,386.8 L991.2,382.2 L997.2,380.4 L996.4,382.4 C999.2,383 1001.6,382.2 1002,379.8 Z"/>
  </g>
 </g>
</svg>
<!-- result dialog -->
<div class="abs" style="left:78.6px;top:404px;width:359.4px;height:181.8px;background:#f6f6f6;"></div>
<div class="abs" style="left:79.6px;top:404.6px;width:358.4px;height:181.2px;background:#fff;border:1px solid #707070;box-sizing:border-box;"></div>
<div class="abs" style="left:80.6px;top:424px;width:355.2px;height:147px;background:#fafafa;"></div>
<div class="abs" style="left:79.6px;top:405px;width:356.2px;height:19.2px;background:#545454;"></div>
<div class="abs vd" style="left:85px;top:405.4px;height:19px;line-height:19.4px;font-size:7.65px;font-weight:bold;color:#fff;">Result</div>
<div class="abs" style="left:80.6px;top:570.9px;width:355.2px;height:13px;background:#d5d1c9;border-top:1px solid #7c7c7c;box-sizing:border-box;"></div>
<div class="abs vd" style="left:85.4px;top:429px;height:12px;line-height:12px;font-size:7.7px;font-weight:bold;color:#111;">Layer: Parcel</div>
<!-- table -->
<div class="abs" style="left:83.4px;top:438.8px;width:349.6px;height:28px;background:#d9d7ca;"></div>
<div class="abs vd th" style="left:84px;width:20.8px;text-align:left;padding-left:3px;box-sizing:border-box;">@</div>
<div class="abs vd th" style="left:105.6px;width:110.2px;">Parcel No.</div>
<div class="abs vd th" style="left:216.6px;width:109.6px;">Area [m²]</div>
<div class="abs vd th" style="left:327px;width:105.4px;">Area [ha]</div>
<div class="abs vd td" style="left:84px;width:20.8px;background:#eceadf;"></div>
<div class="abs vd td" style="left:105.6px;width:110.2px;">J2105</div>
<div class="abs vd td" style="left:216.6px;width:109.6px;">1103</div>
<div class="abs vd td" style="left:327px;width:105.4px;">0.11</div>
<svg width="1024" height="640" viewBox="0 0 1024 640">
 <rect x="423.8" y="409.7" width="9.3" height="10" fill="#fff" stroke="#111" stroke-width="1"/>
 <path d="M425.6,411.6 L431.4,417.8 M431.4,411.6 L425.6,417.8" stroke="#111" stroke-width="1.5" fill="none"/>
 <!-- magnifier -->
 <line x1="97.4" y1="461" x2="100.4" y2="464.2" stroke="#222" stroke-width="1.6" stroke-linecap="round"/>
 <circle cx="94.2" cy="457.8" r="4.3" fill="#fff" stroke="#333" stroke-width="0.8"/>
 <circle cx="94.2" cy="457.8" r="2.5" fill="#2a55c8"/>
 <path d="M92.6,457.8 H95.8 M94.2,456.2 V459.4" stroke="#fff" stroke-width="0.8" fill="none"/>
 <!-- resize grip -->
 <path d="M428,583 L435.4,575.6 M431,583 L435.4,578.6 M433.8,583 L435.4,581.4" stroke="#777" stroke-width="0.7" fill="none"/>
 <!-- scale bar under dialog -->
</svg>
<!-- footer -->
<div id="footer" class="abs"></div>
<div class="abs vd" style="left:20.6px;top:607px;height:25px;line-height:26.4px;font-size:7.8px;color:#fff;white-space:pre;">X: 324871</div>
<div class="abs vd" style="left:73.5px;top:607px;height:25px;line-height:26.4px;font-size:7.8px;color:#fff;white-space:pre;">Y: 9489093</div>
<div class="abs vd" style="right:18.6px;top:607px;height:25px;line-height:26.4px;font-size:8.07px;color:#f5a521;white-space:nowrap;">Visitor Count: 5267 (in Feb), 12094 (in 2023)</div>
</body>
</html>
